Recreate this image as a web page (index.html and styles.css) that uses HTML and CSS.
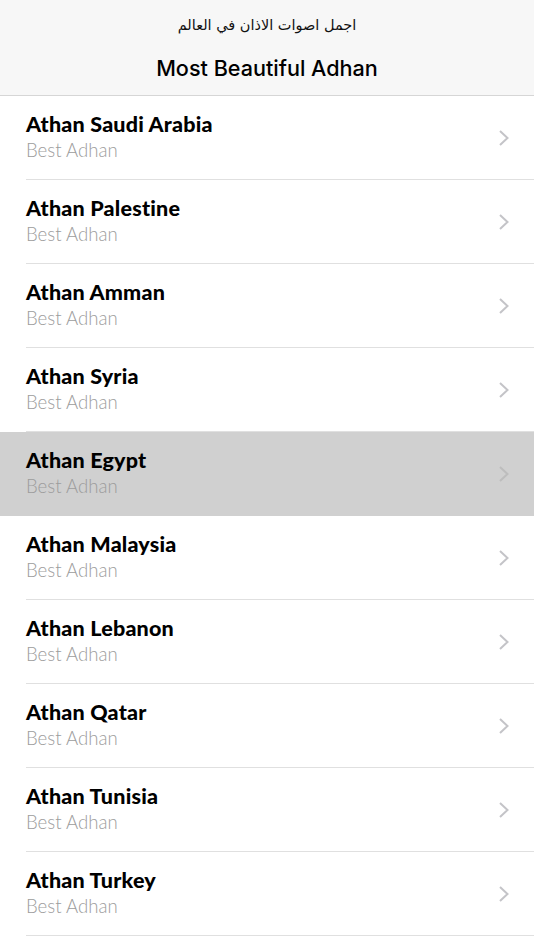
FILE: index.html
```html
<!DOCTYPE html>
<html>
<head>
<meta charset="utf-8">
<link rel="stylesheet" href="styles.css">
</head>
<body>
<header class="nav">
  <div class="prompt" dir="rtl">اجمل اصوات الاذان في العالم</div>
  <div class="title">Most Beautiful Adhan</div>
</header>
<ul class="list">
  <li class="row"><div class="text"><div class="name">Athan Saudi Arabia</div><div class="sub">Best Adhan</div></div><svg class="chev" viewBox="0 0 12 18"><path d="M2 2l7.5 7L2 16"/></svg></li>
  <li class="row"><div class="text"><div class="name">Athan Palestine</div><div class="sub">Best Adhan</div></div><svg class="chev" viewBox="0 0 12 18"><path d="M2 2l7.5 7L2 16"/></svg></li>
  <li class="row"><div class="text"><div class="name">Athan Amman</div><div class="sub">Best Adhan</div></div><svg class="chev" viewBox="0 0 12 18"><path d="M2 2l7.5 7L2 16"/></svg></li>
  <li class="row"><div class="text"><div class="name">Athan Syria</div><div class="sub">Best Adhan</div></div><svg class="chev" viewBox="0 0 12 18"><path d="M2 2l7.5 7L2 16"/></svg></li>
  <li class="row selected"><div class="text"><div class="name">Athan Egypt</div><div class="sub">Best Adhan</div></div><svg class="chev" viewBox="0 0 12 18"><path d="M2 2l7.5 7L2 16"/></svg></li>
  <li class="row"><div class="text"><div class="name">Athan Malaysia</div><div class="sub">Best Adhan</div></div><svg class="chev" viewBox="0 0 12 18"><path d="M2 2l7.5 7L2 16"/></svg></li>
  <li class="row"><div class="text"><div class="name">Athan Lebanon</div><div class="sub">Best Adhan</div></div><svg class="chev" viewBox="0 0 12 18"><path d="M2 2l7.5 7L2 16"/></svg></li>
  <li class="row"><div class="text"><div class="name">Athan Qatar</div><div class="sub">Best Adhan</div></div><svg class="chev" viewBox="0 0 12 18"><path d="M2 2l7.5 7L2 16"/></svg></li>
  <li class="row"><div class="text"><div class="name">Athan Tunisia</div><div class="sub">Best Adhan</div></div><svg class="chev" viewBox="0 0 12 18"><path d="M2 2l7.5 7L2 16"/></svg></li>
  <li class="row"><div class="text"><div class="name">Athan Turkey</div><div class="sub">Best Adhan</div></div><svg class="chev" viewBox="0 0 12 18"><path d="M2 2l7.5 7L2 16"/></svg></li>
</ul>
</body>
</html>
```
FILE: styles.css
```css
html, body {
  margin: 0;
  padding: 0;
  background: #ffffff;
}
body {
  width: 534px;
  height: 950px;
  overflow: hidden;
}
.nav {
  height: 95px;
  background: #f7f7f7;
  border-bottom: 1px solid #d6d6d6;
  display: flex;
  flex-direction: column;
  align-items: center;
}
.prompt {
  font-family: "DejaVu Sans", sans-serif;
  font-size: 14.5px;
  color: #111;
  margin-top: 14px;
  line-height: 22px;
}
.title {
  font-family: Inter, "Liberation Sans", sans-serif;
  font-weight: 500;
  font-size: 21.6px;
  color: #000;
  margin-top: 19px;
  line-height: 26px;
}
.list {
  list-style: none;
  margin: 0;
  padding: 0;
}
.row {
  height: 84px;
  box-sizing: border-box;
  padding-left: 26px;
  display: flex;
  align-items: stretch;
  position: relative;
}
.row .text {
  flex: 1;
  border-bottom: 1px solid #e0e0e0;
  padding-top: 15px;
}
.row.selected {
  background: #d0d0d0;
}
.row.selected .text {
  border-bottom-color: #d0d0d0;
}
.name {
  font-family: Lato, "Liberation Sans", sans-serif;
  font-weight: 900;
  font-size: 21.5px;
  letter-spacing: 0.2px;
  line-height: 26px;
  color: #000;
}
.sub {
  font-family: Lato, "Liberation Sans", sans-serif;
  font-weight: 300;
  font-size: 18.6px;
  line-height: 26px;
  color: #9c9c9c;
  margin-top: 0;
}
.chev {
  position: absolute;
  right: 24px;
  top: 33px;
  width: 12px;
  height: 18px;
  fill: none;
  stroke: #c4c4c8;
  stroke-width: 2;
}
.selected .chev {
  stroke: #bdbdbd;
}
```
